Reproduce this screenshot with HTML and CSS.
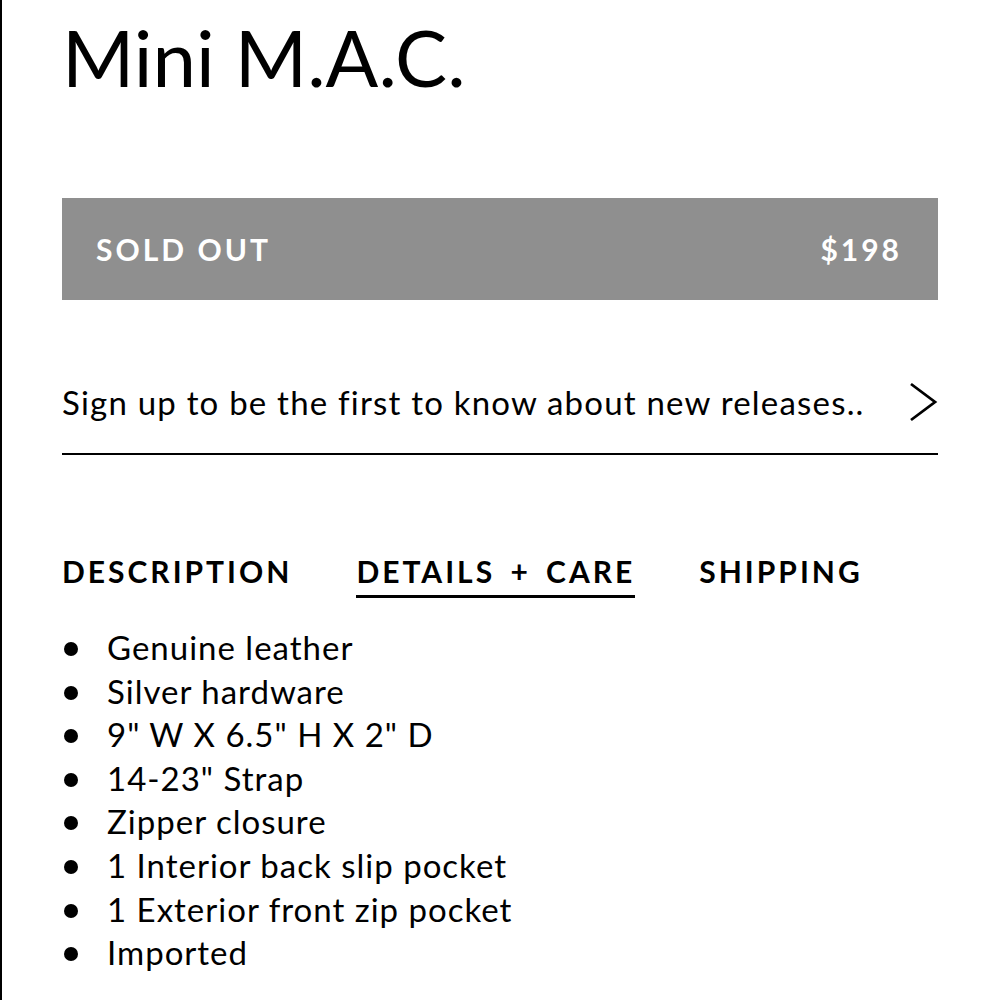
FILE: index.html
```html
<!DOCTYPE html>
<html lang="en">
<head>
    <meta charset="UTF-8">
    <meta name="viewport" content="width=device-width, initial-scale=1.0">
    <title>Mini M.A.C.</title>
    <link rel="stylesheet" href="styles.css">
</head>
<body>
    <div class="page">
        <h1 class="product-title">Mini M.A.C.</h1>

        <div class="buy-bar">
            <span class="buy-status">SOLD OUT</span>
            <span class="buy-price">$198</span>
        </div>

        <div class="signup">
            <span class="signup-text">Sign up to be the first to know about new releases..</span>
            <svg class="signup-arrow" width="30" height="40" viewBox="0 0 30 40">
                <polyline points="3,2 27,20 3,38" fill="none" stroke="#000" stroke-width="2.8"/>
            </svg>
        </div>

        <div class="tabs">
            <span class="tab">DESCRIPTION</span>
            <span class="tab active">DETAILS + CARE</span>
            <span class="tab">SHIPPING</span>
        </div>

        <ul class="details">
            <li>Genuine leather</li>
            <li>Silver hardware</li>
            <li>9" W X 6.5" H X 2" D</li>
            <li>14-23" Strap</li>
            <li>Zipper closure</li>
            <li>1 Interior back slip pocket</li>
            <li>1 Exterior front zip pocket</li>
            <li>Imported</li>
        </ul>
    </div>
</body>
</html>
```

FILE: styles.css
```css
body {
    margin: 0;
    font-family: Lato, 'Liberation Sans', sans-serif;
    color: #000;
    background: #fff;
}

.page {
    min-height: 1000px;
    box-sizing: border-box;
    border-left: 2px solid #000;
    padding: 18px 62px 0 60px;
}

.product-title {
    font-size: 78px;
    font-weight: 400;
    line-height: 1;
    margin: 0 0 102px 0;
}

.buy-bar {
    display: flex;
    justify-content: space-between;
    align-items: center;
    height: 102px;
    padding: 0 36px 0 34px;
    background-color: #8f8f8f;
    color: #fff;
    font-size: 30px;
    font-weight: 700;
    letter-spacing: 3px;
}

.signup {
    display: flex;
    justify-content: space-between;
    align-items: center;
    margin-top: 82px;
    padding-bottom: 31px;
    border-bottom: 2px solid #000;
}

.signup-text {
    font-size: 33px;
    letter-spacing: 1.2px;
}

.signup-arrow {
    display: block;
}

.tabs {
    display: flex;
    gap: 64px;
    margin-top: 98px;
    font-size: 30px;
    font-weight: 700;
    letter-spacing: 3px;
    word-spacing: 5px;
}

.tab {
    padding-bottom: 6px;
}

.tab.active {
    border-bottom: 3px solid #000;
}

.details {
    list-style: none;
    margin: 28px 0 0 0;
    padding: 0;
    font-size: 33px;
    line-height: 43.6px;
    letter-spacing: 1px;
}

.details li {
    position: relative;
    padding-left: 45px;
}

.details li::before {
    content: "";
    position: absolute;
    left: 2px;
    top: 16px;
    width: 14px;
    height: 14px;
    border-radius: 50%;
    background: #000;
}
```
